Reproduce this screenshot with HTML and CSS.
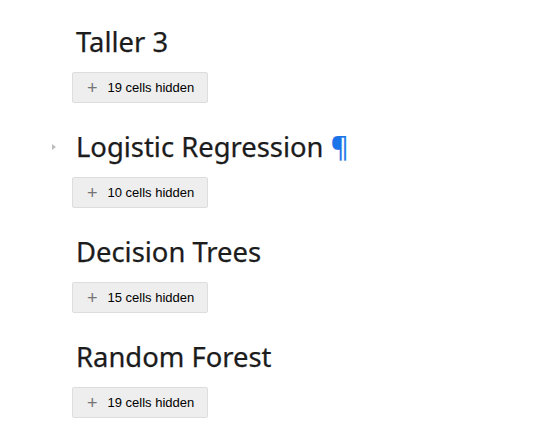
FILE: index.html
```html
<!DOCTYPE html>
<html>
<head>
<meta charset="utf-8">
<link rel="stylesheet" href="styles.css">
</head>
<body>
<div class="notebook">
  <section class="section">
    <h2 class="heading">Taller 3</h2>
    <button class="hidden-btn"><span class="plus">+</span><span>19 cells hidden</span></button>
  </section>
  <section class="section">
    <h2 class="heading"><span class="caret"></span>Logistic Regression <span class="pilcrow">¶</span></h2>
    <button class="hidden-btn"><span class="plus">+</span><span>10 cells hidden</span></button>
  </section>
  <section class="section">
    <h2 class="heading">Decision Trees</h2>
    <button class="hidden-btn"><span class="plus">+</span><span>15 cells hidden</span></button>
  </section>
  <section class="section">
    <h2 class="heading">Random Forest</h2>
    <button class="hidden-btn"><span class="plus">+</span><span>19 cells hidden</span></button>
  </section>
</div>
</body>
</html>
```
FILE: styles.css
```css
html, body {
  margin: 0;
  padding: 0;
  background: #fff;
}
.notebook {
  padding: 25px 0 0 72px;
  display: flex;
  flex-direction: column;
  gap: 27px;
}
.section {
  display: flex;
  flex-direction: column;
  align-items: flex-start;
  gap: 13px;
}
.heading {
  position: relative;
  margin: 0 0 0 4px;
  font-family: "Noto Sans", "Open Sans", sans-serif;
  font-weight: 400;
  font-size: 27.4px;
  line-height: 34px;
  color: #1c1c1c;
  -webkit-text-stroke: 0.25px #1c1c1c;
}
.caret {
  position: absolute;
  left: -24px;
  top: 14px;
  width: 0;
  height: 0;
  border-left: 4px solid #bdbdbd;
  border-top: 3.5px solid transparent;
  border-bottom: 3.5px solid transparent;
  -webkit-text-stroke: 0;
}
.pilcrow {
  color: #1a73e8;
  -webkit-text-stroke: 0.25px #1a73e8;
}
.hidden-btn {
  display: flex;
  align-items: center;
  height: 31px;
  width: 136px;
  padding: 0 0 0 14px;
  box-sizing: border-box;
  background: #eeeeee;
  border: 1px solid #dddddd;
  border-radius: 2px;
  font-family: "Liberation Sans", Arial, sans-serif;
  font-size: 13px;
  color: #000;
}
.plus {
  font-size: 18px;
  font-weight: 300;
  color: #757575;
  margin-right: 10px;
  line-height: 1;
}
```
